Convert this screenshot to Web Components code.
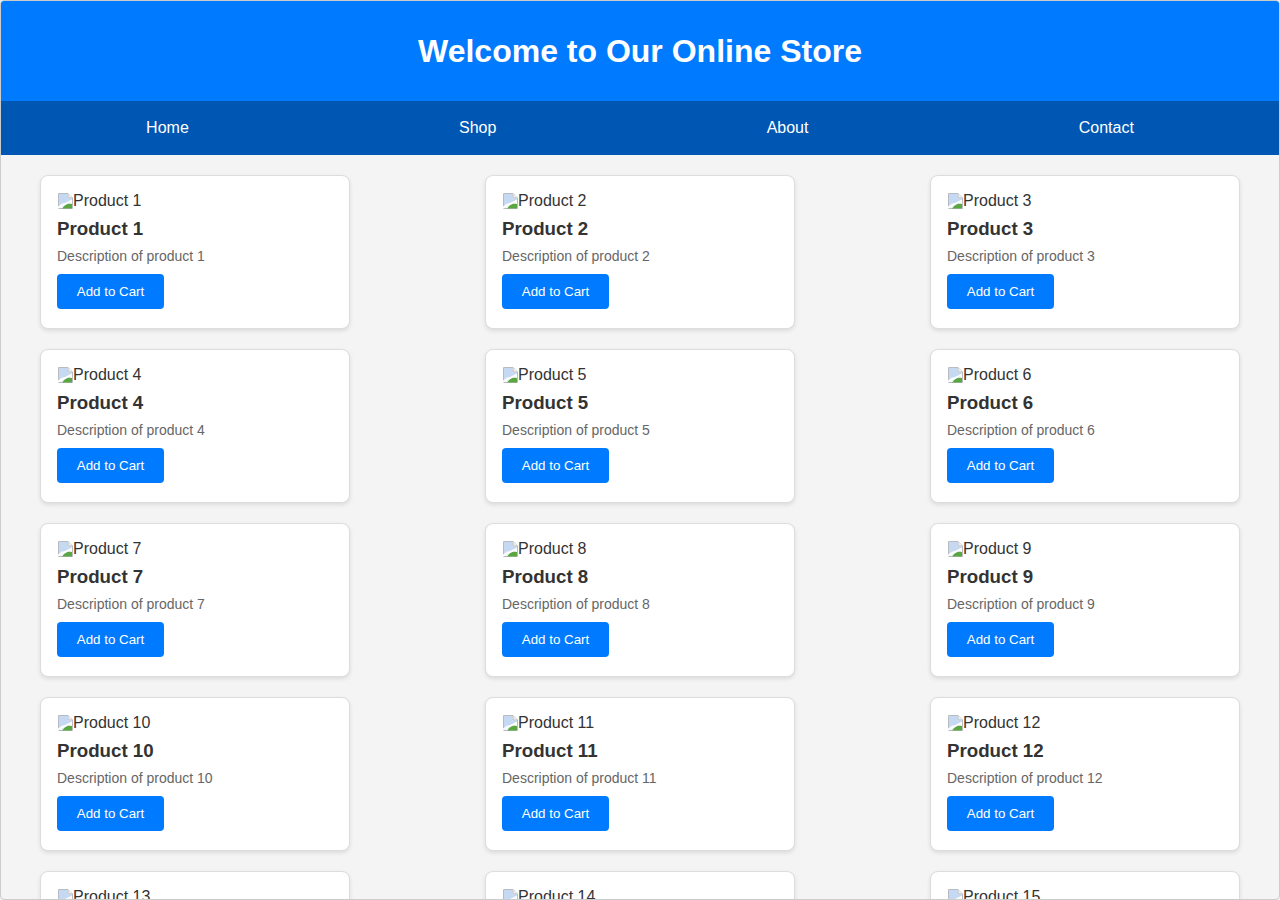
<!DOCTYPE html>
<html lang="en"><head><meta charset="utf-8"><title>Online Store</title>
<style>
html,body{margin:0;padding:0;height:900px;overflow:hidden;background:#f4f4f4}
body{font-family:"Liberation Sans",Arial,sans-serif;color:#333;font-size:16px}
store-app{height:900px}
</style></head><body>
<store-app></store-app>
<script>
class StoreHeader extends HTMLElement{constructor(){super();this.attachShadow({mode:'open'}).innerHTML=`<style>
:host{display:block;background:#007bff;color:#fff;text-align:center}
h1{margin:0;padding:32px 0;font-size:32px;line-height:36px;font-weight:700}
</style><h1><slot></slot></h1>`}}
class StoreNav extends HTMLElement{constructor(){super();this.attachShadow({mode:'open'}).innerHTML=`<style>
:host{display:flex;justify-content:space-around;padding:18px 10px;background:#0056b3;color:#fff;line-height:18px}
</style><slot></slot>`}}
class NavLink extends HTMLElement{constructor(){super();this.attachShadow({mode:'open'}).innerHTML=`<style>
:host{display:block;color:#fff;font-size:16px}
</style><slot></slot>`}}
class BrokenImage extends HTMLElement{constructor(){super();this.attachShadow({mode:'open'}).innerHTML=`<style>
:host{display:flex;align-items:center;height:18px;line-height:18px;font-size:16px;color:#333}
svg{display:block;flex:none;width:16px;height:16px}
</style><svg viewBox="0 0 16 16" aria-hidden="true">
<path d="M1.5 .5H11L15.5 5V15.5H1.5Z" fill="#fff" stroke="#b8bcc2"/>
<path d="M2 1H10.5V5.5H15V9L10 12 2 15Z" fill="#c5d9f2"/>
<path d="M2 13C5 9 8 10 10 11L2 15Z" fill="#e8eef5"/>
<path d="M15 8V15H6L9 13Z" fill="#fff"/>
<path d="M5 15.5C8 11 11 10 15 11V15.5Z" fill="#5aa640"/>
<path d="M1 13.5 15 6.5V8.5L1 15.5Z" fill="#fff"/>
<path d="M11 .5V5H15.5" fill="#eef1f5" stroke="#b8bcc2"/>
</svg><slot></slot>`}}
class ProductCard extends HTMLElement{
static get observedAttributes(){return['name']}
constructor(){super();this.attachShadow({mode:'open'}).innerHTML=`<style>
:host{display:block;box-sizing:border-box;width:310px;height:154px;background:#fff;border:1px solid #ddd;border-radius:8px;box-shadow:0 2px 4px rgba(0,0,0,.1);padding:16px}
h3{margin:8px 0 0;font-size:18.72px;line-height:22px;font-weight:700;color:#333}
p{margin:8px 0 10px;font-size:14px;line-height:16px;color:#666}
button{display:block;width:107px;height:35px;padding:0;border:0;border-radius:4px;background:#007bff;color:#fff;font:13.333px "Liberation Sans",Arial,sans-serif}
</style><broken-image></broken-image><h3></h3><p></p><button type="button">Add to Cart</button>`}
connectedCallback(){const n=this.getAttribute('index');const s=this.shadowRoot;s.querySelector('broken-image').textContent='Product '+n;s.querySelector('h3').textContent='Product '+n;s.querySelector('p').textContent='Description of product '+n}}
class ProductGrid extends HTMLElement{constructor(){super();this.attachShadow({mode:'open'}).innerHTML=`<style>
:host{display:grid;grid-template-columns:repeat(3,310px);justify-content:space-between;row-gap:20px;padding:20px 39px}
</style><slot></slot>`}}
class StoreApp extends HTMLElement{constructor(){super();let c='';for(let i=1;i<=15;i++)c+=`<product-card index="${i}"></product-card>`;
this.attachShadow({mode:'open'}).innerHTML=`<style>
:host{display:block;box-sizing:border-box;height:900px;border:1px solid #ccc;border-radius:4px;overflow:hidden;background:#f4f4f4}
</style><store-header>Welcome to Our Online Store</store-header><store-nav><nav-link>Home</nav-link><nav-link>Shop</nav-link><nav-link>About</nav-link><nav-link>Contact</nav-link></store-nav><product-grid>${c}</product-grid>`}}
customElements.define('store-header',StoreHeader);
customElements.define('nav-link',NavLink);
customElements.define('store-nav',StoreNav);
customElements.define('broken-image',BrokenImage);
customElements.define('product-card',ProductCard);
customElements.define('product-grid',ProductGrid);
customElements.define('store-app',StoreApp);
</script></body></html>
